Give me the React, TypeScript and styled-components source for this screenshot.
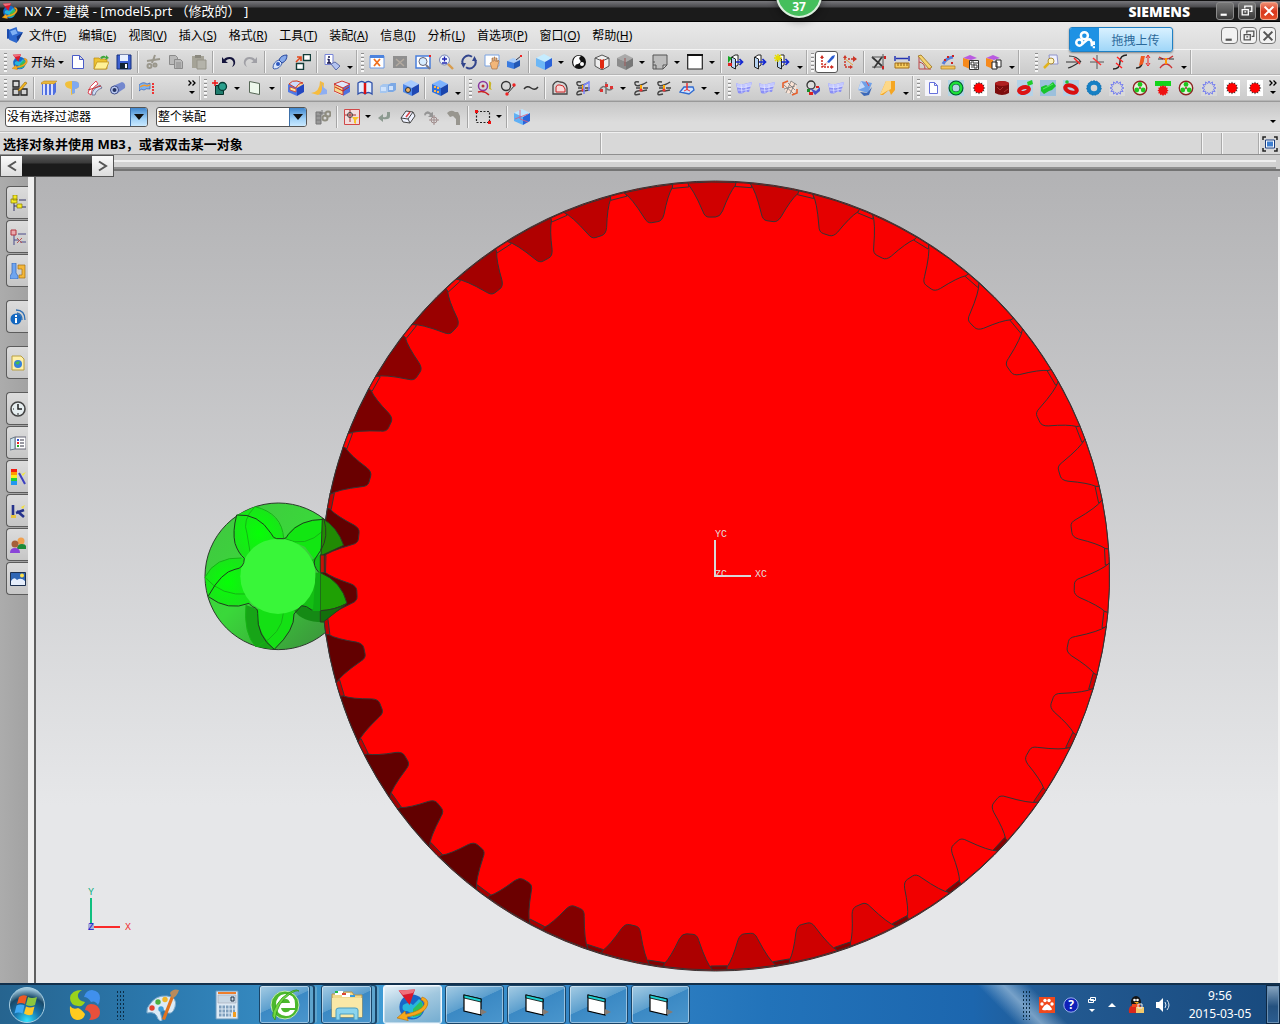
import React from "react";
import styled, { createGlobalStyle, css } from "styled-components";

const UI_FONT = `"Noto Sans", "Noto Sans CJK SC", sans-serif`;

const GlobalStyle = createGlobalStyle`
  * { box-sizing: border-box; }
  body { margin: 0; font-family: ${UI_FONT}; font-size: 12px; color: #000; background: #b4b4b4; }
  button { font: inherit; color: inherit; border: 0; padding: 0; background: none; }
`;

/* ---------- small drawings ---------- */

const cubeShape = (top: string, left: string, right: string) => (
  <>
    <path d="M0 4 8 0l8 4-7 4z" fill={top} />
    <path d="M0 4l9 4v8l-9-4z" fill={left} />
    <path d="M16 4 9 8v8l7-4z" fill={right} />
  </>
);
const surfaceShape = (
  <>
    <path d="M0 3q4 2 8 1t8-2l-3 10q-4-1-6 1-2 1-5 0z" fill="#8b90f6" />
    <path d="M0 3q4 2 8 1t8-2l-1 4q-8 3-14 1z" fill="#c3c8ff" />
    <path d="M1 7q6 2 14-1M2 10q5 1 12-1M5 4l1 9M10 4v8" stroke="#e6e8ff" fill="none" strokeWidth=".7" />
  </>
);
const curveShape = (
  <>
    <path d="M6 2Q1 1 2 4t6 1 6-3M7 14q-6 2-5-1t7-2l5-1M3 8h5M10 8h5" stroke="#444" fill="none" strokeWidth="1.4" />
    <path d="M8 5v6" stroke="#fa0" strokeWidth="2" />
    <circle cx="8" cy="10" r="1.6" fill="#e33" />
  </>
);
const gearPoints = (n: number, r1: number, r2: number) =>
  Array.from({ length: n * 2 }, (_, i) => {
    const a = (i * Math.PI) / n;
    const r = i % 2 ? r1 : r2;
    return `${(8 + r * Math.cos(a)).toFixed(2)},${(8 + r * Math.sin(a)).toFixed(2)}`;
  }).join(" ");
const redGear = (
  <>
    <path d="M0 0h16v16H0z" fill="#fff" />
    <polygon points={gearPoints(12, 4.4, 6.4)} fill="#333" />
    <circle cx="8" cy="8" r="4.8" fill="#f00" />
  </>
);
const blueGearLine = (
  <>
    <path d="M0 0h16v16H0z" fill="#d9d9d9" />
    <polygon points={gearPoints(12, 4.6, 7)} fill="none" stroke="#7780f0" />
  </>
);
const planetary = (
  <>
    <circle cx="8" cy="8" r="6.7" fill="#e6f4de" stroke="#8d2424" strokeWidth="1.4" />
    <circle cx="8" cy="4.4" r="2.4" fill="#1ec81e" />
    <circle cx="4.800" cy="10" r="2.4" fill="#1ec81e" />
    <circle cx="11.200" cy="10" r="2.4" fill="#1ec81e" />
    <circle cx="8" cy="8" r="1.2" fill="#a55" />
  </>
);
const exitDoor = (
  <>
    <path d="M4 3l3-2h3v10l-3 2z" fill="#fff" stroke="#222" />
    <path d="M3.500 3l4 2v10l-4-2z" fill="#b8d4f4" stroke="#222" />
    <path d="M8 8h6M11.500 5l3 3-3 3" stroke="#1428d0" strokeWidth="1.700" fill="none" />
  </>
);
const globe = (
  <>
    <circle cx="7.500" cy="9" r="6.300" fill="#1767c8" />
    <path d="M3 8q3-2 5 0l3-3q3 2 2 6-3 5-7 3 2-2-1-3-3 0-2-3z" fill="#27b5dc" />
    <path d="M8 10l4-4q2 3 0 7l-4 1z" fill="#2fc05c" />
    <path d="M12.500 4q3.500 1 2.800 4Q14 12.500 5 14l.600 1.800L0 14.500 4 11l.400 1.600Q12 11 13.500 8q.800-2-1.500-2.500z" fill="#f5a81c" stroke="#b96f0a" strokeWidth=".3" />
    <path d="M.800.800 9 .300 6.300 8z" fill="#d8182c" />
    <path d="M.800.800 9 .300 8 2 3 3z" fill="#f0707c" />
  </>
);

const ICONS: Record<string, React.ReactNode> = {
  nx: globe,
  blueprint: (
    <>
      <path d="M1 3 9 0l1 4 5 1-6 10-7-3z" fill="#2d68ce" />
      <path d="M3 4l5-2 2 4-5 2z" fill="#7fb0f4" />
      <path d="M9 9l6-4-5 9z" fill="#143a8c" />
      <path d="M0 2h2v9H0z" fill="#1b4bad" />
    </>
  ),
  newDoc: <path d="M2.500 1.500h7l4 4v9h-11zM9.500 1.500v4h4" fill="#fff" stroke="#4a5cc8" strokeLinejoin="round" />,
  open: (
    <>
      <path d="M1 4h5l1 1h7v10H1z" fill="#eec22f" stroke="#b98a12" strokeWidth=".7" />
      <path d="M4 8h12l-3 7H1z" fill="#fff095" stroke="#b98a12" strokeWidth=".7" />
      <path d="M7 4q3-4 6-1V1l3 3-4 2 1-2q-3-1-4 1z" fill="#3ea63c" />
    </>
  ),
  save: (
    <>
      <path d="M1 1h14v14H1z" fill="#3b5fd0" stroke="#17307c" />
      <path d="M4 1h8v6H4z" fill="#e8f0ff" />
      <path d="M4 9h8v6H4z" fill="#123" />
      <path d="M9 10h2v4H9z" fill="#fff" />
    </>
  ),
  cut: (
    <g stroke="#9a978c" fill="none" strokeWidth="2">
      <path d="M10 1 7 9M2 7l13-2" />
      <circle cx="4.500" cy="12" r="2" />
      <circle cx="10" cy="11" r="1.500" />
    </g>
  ),
  copy: (
    <g fill="#b9b9b9" stroke="#8b8b8b">
      <path d="M1.500 1.500h6l2 2v7h-8z" />
      <path d="M6.500 5.500h6l2 2v7h-8z" />
      <path d="M8 9h5M8 11h5M8 13h5" />
    </g>
  ),
  paste: (
    <>
      <path d="M1 2h12v12H1z" fill="#a5a397" />
      <path d="M4 1h6v3H4z" fill="#8a887e" />
      <path d="M6 6h9v9H6z" fill="#b4b3aa" stroke="#959388" />
    </>
  ),
  undo: <path d="M2 3v6h6L5.500 7Q9 3.500 12 6t0 7q4-2 3-6T9.500 3 4 5.500z" fill="#14143c" />,
  redo: <path d="M14 3v6H8l2.500-2Q7 3.500 4 6t0 7Q0 11 1 7t5.500-4T12 5.500z" fill="#a0a0a6" />,
  rocket: (
    <>
      <path d="M1 14q0-6 6-8l3 3q-2 6-8 6z" fill="#d8e5fb" stroke="#3d5fae" />
      <path d="M7 6q2-5 8-5 0 6-5 8z" fill="#86a9ea" stroke="#28489c" />
      <circle cx="6" cy="10" r="2" fill="#2c58c0" />
    </>
  ),
  swap: (
    <>
      <path d="M8.500.500h7v6h-7zM1.500 9.500h7v6h-7z" fill="#fff" stroke="#123c38" strokeWidth="1.400" />
      <path d="M1 8l4-4M2 3h4v4" stroke="#e2481c" strokeWidth="1.600" fill="none" />
    </>
  ),
  info: (
    <>
      <path d="M1 .500h8v10H1z" fill="#fff" stroke="#7784d8" />
      <path d="M5 2v2M5 5v4M3.500 5.500H5M3 9h4" stroke="#15154e" strokeWidth="1.500" />
      <path d="M7 10l4-2 5 4-4 4z" fill="#b3c3f0" stroke="#5b6ba8" />
    </>
  ),
  fit: (
    <>
      <path d="M1 2h14v12H1z" fill="#fff" stroke="#6b98e4" />
      <path d="M1 1h14v3H1z" fill="#4c83de" />
      <path d="M5 5l6 7M11 5l-6 7" stroke="#f0701e" strokeWidth="1.800" />
    </>
  ),
  fitGrey: (
    <>
      <path d="M1 2h14v12H1z" fill="#8f8f8f" />
      <path d="M4 5l8 7M12 5l-8 7" stroke="#b3aaa0" strokeWidth="1.500" />
    </>
  ),
  zoomBox: (
    <>
      <path d="M1 2h14v12H1z" fill="#fff" stroke="#497fdc" strokeWidth="1.500" />
      <circle cx="8" cy="7.500" r="4" fill="#d7ecff" stroke="#667" />
      <path d="M11 11l4 4" stroke="#778" strokeWidth="2" />
      <path d="M14 1h2v2h-2z" fill="#e22" />
    </>
  ),
  zoom: (
    <>
      <circle cx="6.500" cy="6" r="5" fill="#eef5ff" stroke="#7686b4" />
      <path d="M10 10l5 5" stroke="#d89c4c" strokeWidth="2.400" />
      <path d="M4 5h5M6.500 2.500v5M4 9h5" stroke="#2026b0" strokeWidth="1.300" />
    </>
  ),
  rotate: (
    <>
      <path d="M2.500 11A6 6 0 0 1 11 2.800M13.500 5A6 6 0 0 1 5 13.200" fill="none" stroke="#32458c" strokeWidth="2" />
      <path d="M0 9l5 0-2.500 5zM16 7h-5l2.500-5z" fill="#32458c" />
    </>
  ),
  pan: (
    <>
      <path d="M1 1h14v11H1z" fill="#fff" stroke="#7aa3e2" />
      <path d="M6 9l2-1V4h1v3h1V3h1v4h1V4h1v4l1-2 1 1-2 8H8z" fill="#f2b679" stroke="#9b673a" strokeWidth=".600" />
    </>
  ),
  perspective: (
    <>
      <path d="M0 7l6-3 7 2-6 3z" fill="#a9cdfa" />
      <path d="M0 7l7 2v6l-7-2z" fill="#3a7be0" />
      <path d="M13 6 7 9v6l6-3z" fill="#2257b4" />
      <path d="M9 6l5-4" stroke="#334" />
      <path d="M13 1h2v2h-2z" fill="#e22" />
    </>
  ),
  cube: cubeShape("#c5ecff", "#6db7f6", "#2a62d8"),
  yinyang: (
    <>
      <circle cx="8" cy="8" r="7" fill="#111" />
      <path d="M10 2q-3 2-1 4t-2 4q-3 0-3 3Q1 9 3 5t7-3z" fill="#fff" />
      <circle cx="11" cy="10" r="2" fill="#fff" />
    </>
  ),
  cubeRed: (
    <>
      <path d="M1 4 8 1l7 3v8l-7 4-7-4z" fill="#eee" stroke="#555" />
      <path d="M1 4l7 3 7-3M8 7v9" stroke="#555" fill="none" />
      <path d="M6 5l2 1 2-1v9l-2 1-2-1z" fill="#e02a12" />
    </>
  ),
  cubeGrey: (
    <>
      {cubeShape("#aaa", "#8c8c8c", "#777")}
      <path d="M8 4v8" stroke="#955" strokeWidth="1" />
    </>
  ),
  sheet: <path d="M1 1h14v10l-4 4H1zM1 11h3v4M15 11h-4v4M1 8h2" fill="#bdbdbd" stroke="#555" />,
  whiteBox: (
    <>
      <path d="M.700 1h14.600v14H.700z" fill="#fff" stroke="#222" strokeWidth="1.200" />
      <path d="M0 0h16v2H0z" fill="#111" />
    </>
  ),
  door1: (
    <>
      {exitDoor}
      <path d="M0 2l4 2-4 5z" fill="#15a524" />
      <path d="M0 9h4v3H0z" fill="#d22" />
    </>
  ),
  door2: exitDoor,
  door3: (
    <>
      {exitDoor}
      <path d="M4 0v8M0 4h8M1 1l6 6M7 1 1 7" stroke="#e6dc00" strokeWidth="1.400" />
    </>
  ),
  axesPen: (
    <>
      <path d="M3 3v10h9M3 13l5-4" stroke="#cc2b20" fill="none" strokeWidth="1.500" strokeDasharray="2 1" />
      <path d="M1 4l2-3 2 3zM12 11l3 2-3 2z" fill="#cc2b20" />
      <path d="M8 8l5-6 3-1-1 3-5 5z" fill="#2a5cd0" />
    </>
  ),
  axes: (
    <>
      <path d="M3 4v9M3 13h5M6 5h9" stroke="#cc3527" strokeWidth="1.500" strokeDasharray="2 1" />
      <path d="M1 4l2-3 2 3zM11 2l4 3-4 3zM8 11l3 2-3 2z" fill="#cc3527" />
      <path d="M3 5l8 6" stroke="#e9a13b" />
    </>
  ),
  xDim: (
    <>
      <path d="M1 3l10 9M11 3 3 14" stroke="#333" strokeWidth="1.700" />
      <path d="M1 3h14M12 0v16M1 13h11" stroke="#555" />
      <path d="M13 2h2v3h-2zM11 12h2v3h-2z" fill="#c22" />
    </>
  ),
  ruler: (
    <>
      <path d="M1 2v5M15 2v5M2 4.500h12" stroke="#2434b4" strokeWidth="1.500" />
      <path d="M1 9h14v5H1z" fill="#f8cf62" stroke="#a46e16" />
      <path d="M4 9v3M7 9v3M10 9v3M13 9v3" stroke="#8a5a10" />
    </>
  ),
  angle: (
    <>
      <path d="M2 3v12h12M2 8q6 1 6 7" stroke="#b44" fill="none" />
      <path d="M1 2l3-1 11 12-3 2z" fill="#f5d470" stroke="#99701c" strokeWidth=".800" />
    </>
  ),
  measure: (
    <>
      <path d="M1 12h14v3H1z" fill="#f4c35c" stroke="#a77b22" strokeWidth=".700" />
      <path d="M3 10q3-6 10-7" stroke="#5c7fd8" strokeWidth="3" fill="none" />
      <path d="M4 5h2v2H4zM7 2h2v2H7zM12 1h2v2h-2zM11 8h2v2h-2z" fill="#c22" />
    </>
  ),
  boxCopy: (
    <>
      <path d="M0 4l7-3 7 3-6 2z" fill="#b95be0" />
      <path d="M0 4l7 2v9l-7-3z" fill="#f68a1d" />
      <path d="M6.500 6.500h9v9h-9z" fill="#fff" stroke="#333" />
      <path d="M8 8h3v3H8zM11 11h3v3h-3zM8 13h2M12 9h3" stroke="#333" fill="none" />
    </>
  ),
  boxFlip: (
    <>
      <path d="M0 4l7-3 7 3-6 2z" fill="#b95be0" />
      <path d="M0 4l7 2v9l-7-3z" fill="#f68a1d" />
      <path d="M6 8h5v7H6zM10 6h5v7h-5z" fill="#fff" stroke="#222" />
    </>
  ),
  keyDoc: (
    <>
      <path d="M6 1h8l1 9H7z" fill="#eef0ff" stroke="#8f93c8" />
      <circle cx="8" cy="7" r="3" fill="#fff4c0" stroke="#a98b3b" />
      <path d="M6 9l-5 5" stroke="#e2b31c" strokeWidth="2.500" />
    </>
  ),
  trim1: (
    <>
      <path d="M3 2q8 0 12 6M0 8h15M2 14q4-1 10-5" stroke="#333" fill="none" strokeWidth="1.200" />
      <path d="M8 4l6 6" stroke="#f22" strokeWidth="1.500" />
    </>
  ),
  trim2: (
    <>
      <path d="M8 1v14M1 8h14" stroke="#555" />
      <path d="M4 4l8 7" stroke="#f33" strokeWidth="1.500" />
    </>
  ),
  trim3: (
    <>
      <path d="M1 15q7 0 7-7t7-7" stroke="#222" fill="none" strokeWidth="1.400" />
      <path d="M5 3l6 5M4 9l6 5" stroke="#f22" strokeWidth="1.400" />
    </>
  ),
  trim4: (
    <>
      <path d="M1 14q7 1 7-12" stroke="#222" fill="none" strokeWidth="1.500" />
      <path d="M6 2h4l-2 8-4 2z" fill="#f05a20" />
      <path d="M13 2v8M11 4l2-3 2 3M11 9l2 3 2-3" stroke="#e22" fill="none" />
    </>
  ),
  trim5: (
    <>
      <path d="M1 3q7 5 14-1M2 14q6-8 12 0" stroke="#c33" fill="none" strokeWidth="1.300" />
      <path d="M0 5h5M11 5h5" stroke="#333" />
      <path d="M8 4v6" stroke="#f90" strokeWidth="2" />
    </>
  ),
  sketch: (
    <>
      <path d="M1 1h6v6H1zM1 9h6v6H1zM9 9h6v6H9z" fill="none" stroke="#222" strokeWidth="1.300" />
      <path d="M7 9l6-7 2 1-6 7-3 1z" fill="#f6b91f" stroke="#8c6210" strokeWidth=".600" />
    </>
  ),
  extrude: (
    <>
      <path d="M1 3h14v9l-2 3H1z" fill="#4f6fe0" />
      <path d="M0 3l3-2h13l-3 3H0z" fill="#e9b73c" stroke="#b37f1a" strokeWidth=".5" />
      <path d="M3 4v11M7 4v11M11 4v11" stroke="#e8ecff" strokeWidth="1.800" />
    </>
  ),
  revolve: (
    <>
      <path d="M1 4q0-3 7-3t7 3v3q-2 2-4 2v4l-4 2V9Q1 8 1 4z" fill="#f1c03c" />
      <path d="M8 1q7 0 7 3v3q-2 2-4 2v4l-3 1z" fill="#7fa9f0" />
    </>
  ),
  blade: (
    <>
      <path d="M1 13Q2 6 9 1l2 3Q4 8 4 15z" fill="#fff" stroke="#d45" />
      <path d="M5 15q0-6 8-10l2 3q-6 2-7 7z" fill="#ccdcf6" stroke="#557" strokeWidth=".700" />
      <path d="M1 10l13-4" stroke="#c33" />
    </>
  ),
  tube: (
    <>
      <path d="M3 6l9-4q4 1 3 6l-9 6z" fill="#7488ce" />
      <ellipse cx="4.500" cy="10" rx="4" ry="4" fill="#bac9f1" stroke="#3e4d88" />
      <ellipse cx="4.500" cy="10" rx="2" ry="2" fill="#243261" />
    </>
  ),
  offset: (
    <>
      <path d="M0 5q4-4 8-1l3-1v6Q7 8 5 10q-3-2-5 1z" fill="#7db3f2" stroke="#3b62b0" strokeWidth=".700" />
      <path d="M1 7q4-3 7-1l3-1" stroke="#f39a2c" strokeWidth="1.500" fill="none" />
      <path d="M14 3v12" stroke="#e33" strokeDasharray="2 1" strokeWidth="2" />
    </>
  ),
  addCircle: (
    <>
      <path d="M3.500 5.500h8v9h-8z" fill="#1f7c6d" stroke="#052f28" />
      <circle cx="10.500" cy="6.500" r="4" fill="#2aa08d" stroke="#053b33" strokeWidth="1.300" />
      <path d="M0 3h6M3 0v6" stroke="#e11" strokeWidth="1.400" />
    </>
  ),
  planeSheet: <path d="M2.500 1.500l10 2v11l-10-2z" fill="#edf8ec" stroke="#565" />,
  boxOrange: (
    <>
      {cubeShape("#ffd089", "#4f78e6", "#2447c0")}
      <path d="M1 4q3-4 8-3l6 2q-5 0-7 5z" fill="#c9dcfb" stroke="#cf3b28" />
      <path d="M2 7l6 2v3l-6-2z" fill="#ffe79a" stroke="#d4452e" strokeWidth=".8" />
    </>
  ),
  wing: (
    <>
      <path d="M0 13q9-1 9-12l4 2q0 10-6 12z" fill="#f7bc3d" />
      <path d="M10 1l2 6 4 3v4l-8 1q5-5 2-14z" fill="#8eaef2" />
    </>
  ),
  boxRedBand: (
    <>
      {cubeShape("#fff0d0", "#fff", "#4d70e0")}
      <path d="M0 4l9 4v7l-9-4z" fill="#f6d98c" stroke="#c33" />
      <path d="M0 4 8 1l8 3-7 4z" fill="#dfe7fb" stroke="#c33" />
      <path d="M1 7l8 4 6-4" stroke="#cc2614" fill="none" />
    </>
  ),
  book: (
    <>
      <path d="M1 3q4-3 7 0 3-3 7 0v11q-4-3-7 0-3-3-7 0z" fill="#e2edff" stroke="#2f50a8" strokeWidth="1.300" />
      <path d="M8 3v11" stroke="#d11" strokeWidth="2.500" />
    </>
  ),
  slabs: (
    <>
      <path d="M0 6l3-2h6v7l-3 2H0z" fill="#a5c6ef" />
      <path d="M8 5l3-2h5v7l-3 2H8z" fill="#7da9e5" />
      <path d="M1 7h5v4H1zM9 6h4v4H9z" fill="#cfe2fb" />
    </>
  ),
  boxHole: (
    <>
      {cubeShape("#a7cbff", "#4f88ea", "#1f48b4")}
      <circle cx="5" cy="10" r="2.500" fill="#f0b060" stroke="#234" />
    </>
  ),
  boxDots: (
    <>
      {cubeShape("#7db3ff", "#2f70dd", "#1a45ad")}
      <path d="M2 6h2v2H2zM5 7h2v2H5zM2 10h2v2H2zM5 11h2v2H5z" fill="#ffb648" />
    </>
  ),
  circ1: (
    <>
      <circle cx="6" cy="6" r="4.500" fill="none" stroke="#8a35a0" strokeWidth="1.500" />
      <circle cx="6" cy="6" r="1.500" fill="#b33" />
      <path d="M1 12q6-2 11 3" stroke="#c22" fill="none" strokeWidth="1.500" />
      <path d="M12 1q3 1 2 4t1 5l-3-1z" fill="#c9b529" />
    </>
  ),
  circ2: (
    <>
      <circle cx="6" cy="6" r="4.500" fill="none" stroke="#333" strokeWidth="1.300" />
      <path d="M15 5l-8 9" stroke="#333" />
      <circle cx="14" cy="5" r="1.700" fill="#e22" />
      <circle cx="7" cy="14" r="1.700" fill="#e22" />
    </>
  ),
  wave: <path d="M1 9q3-4 7-1t7-1" fill="none" stroke="#333" strokeWidth="1.400" />,
  contour: (
    <>
      <path d="M1 14V5q3-5 7-3 6 0 7 6v6z" fill="none" stroke="#444" strokeWidth="1.300" />
      <path d="M4 12V7q1-3 4-2 4 0 5 4v3z" fill="#f8d9d9" stroke="#c22" />
    </>
  ),
  curveA: (
    <>
      {curveShape}
      <path d="M9 14V5l5-3v9" stroke="#7a86ff" fill="none" strokeWidth="1.500" />
    </>
  ),
  curveB: (
    <>
      <path d="M1 11q4-7 7-3t7 0M8 2v12" stroke="#777" fill="none" strokeWidth="1.500" />
      <path d="M7 4h3v3H7zM2 9h3v3H2zM12 6h3v3h-3z" fill="#d33" />
    </>
  ),
  curveC: curveShape,
  project: (
    <>
      <path d="M1 12l4-5h9l1 3-5 4z" fill="#cfe3ff" stroke="#2f6ad0" strokeWidth="1.300" />
      <path d="M3 2h10" stroke="#444" strokeWidth="1.500" />
      <path d="M8 3v7" stroke="#e33" strokeWidth="1.500" />
      <path d="M5 11q3-3 6 0" stroke="#e33" fill="none" />
    </>
  ),
  surf: surfaceShape,
  surfMesh: (
    <>
      <path d="M2 5l7-4 6 4-3 9-8-1z" fill="#fbe3d5" />
      <path d="M2 5l10 9M6 3l7 7M9 1l6 4M4 13 9 1M8 14l5-11M2 9l11-3" stroke="#777" strokeWidth=".800" />
      <path d="M1 8V3l5-2M15 9v4l-5 2" stroke="#e8602c" fill="none" strokeWidth="1.600" />
    </>
  ),
  surfTool: (
    <>
      <circle cx="6" cy="5" r="4" fill="#ddd" stroke="#333" strokeWidth="1.300" />
      <path d="M5 8l6 3 4-4v4l-5 4z" fill="#4650c8" />
      <path d="M2 9h3v3H2z" fill="#1a8c2a" />
      <path d="M4 12h4v3H4zM11 6h3v2h-3z" fill="#d22" />
    </>
  ),
  fold: (
    <>
      <path d="M4 1l11 2-4 10-10-3z" fill="#6fa0e8" />
      <path d="M4 1l4 6-7 3z" fill="#c5dafa" />
      <path d="M3 12l7 1 5-6-3 8-5 1z" fill="#3b68b8" />
      <path d="M9 1l3 5" stroke="#e44" />
    </>
  ),
  boot: (
    <>
      <path d="M6 1h9v9l-4 5-2-5-6 5H0z" fill="#f5a623" />
      <path d="M6 1h5v8l-4 2-7 4z" fill="#fdd888" />
    </>
  ),
  page: (
    <>
      <path d="M0 0h16v16H0z" fill="#f4f4fa" />
      <path d="M4.500 2.500h5l3 3v8h-8zM9.500 2.500v3h3" fill="#fff" stroke="#6671dc" />
    </>
  ),
  ringGreen: (
    <>
      <path d="M0 0h16v16H0z" fill="#b4d4e4" />
      <circle cx="8" cy="8" r="5.500" fill="none" stroke="#053" strokeWidth="4" />
      <circle cx="8" cy="8" r="5.200" fill="none" stroke="#1de03a" strokeWidth="2.400" />
    </>
  ),
  redGear,
  cylRed: (
    <>
      <path d="M1 3q7-4 14 0v10q-7 4-14 0z" fill="#7c0c0c" />
      <ellipse cx="8" cy="3.500" rx="7" ry="2.500" fill="#b02020" />
      <path d="M3 7l3 3 3-3M10 12l4-3" stroke="#a33" fill="none" />
    </>
  ),
  gearPair: (
    <>
      <path d="M0 0h16v16H0z" fill="#b5d3e8" />
      <ellipse cx="7" cy="10" rx="5" ry="2.800" fill="none" stroke="#dc1414" strokeWidth="4" transform="rotate(-15 7 10)" />
      <path d="M10 2l5-2 1 4-5 2z" fill="#22cc2a" />
    </>
  ),
  shaft: (
    <>
      <path d="M0 0h16v16H0z" fill="#9cc0dc" />
      <path d="M1 7l5-2 2 1 5-4 3 4-4 4-3 1-5 3-3-3z" fill="#18c42c" />
      <path d="M3 9l10-5" stroke="#5de868" />
    </>
  ),
  ringRed: (
    <>
      <path d="M0 0h16v16H0z" fill="#b5d3e8" />
      <ellipse cx="8" cy="9" rx="6" ry="3.400" fill="none" stroke="#d91010" strokeWidth="4" transform="rotate(20 8 9)" />
      <circle cx="4" cy="2" r="1.800" fill="#1fbf35" />
    </>
  ),
  ringBlue: (
    <>
      <circle cx="8" cy="8" r="5.300" fill="none" stroke="#1680c4" strokeWidth="4" />
      <circle cx="8" cy="8" r="7.200" fill="none" stroke="#0f6cae" strokeDasharray="1.500 1.500" />
    </>
  ),
  gearLine: blueGearLine,
  planetary,
  rack: (
    <>
      <path d="M0 1h16v5H0z" fill="#13d41b" />
      <polygon points={gearPoints(12, 4.2, 5.600)} transform="translate(0 2.500)" fill="#e11" />
    </>
  ),
  chain: (
    <>
      <path d="M1 3h5v12H1zM1 7h5M1 11h5" fill="#999" stroke="#777" />
      <circle cx="10" cy="9" r="2.500" fill="none" stroke="#8f8d80" strokeWidth="2" />
      <circle cx="13" cy="5" r="2.500" fill="none" stroke="#8f8d80" strokeWidth="2" />
      <path d="M7 1v5M4 4h6" stroke="#777" />
    </>
  ),
  target: (
    <>
      <path d="M.500.500h15v15H.500z" fill="#f2dede" stroke="#d04848" />
      <path d="M6 1v12M1 6h11" stroke="#a33" />
      <circle cx="6" cy="6" r="2.500" fill="none" stroke="#444" />
      <path d="M8 8h7l-3 3v4l-2-1v-3z" fill="#f6c52a" />
    </>
  ),
  returnGrey: <path d="M13 3v4q0 4-7 3v3L1 9l5-4v3q4 1 4-2V3z" fill="#8c9a90" />,
  eraser: (
    <>
      <path d="M1 9l5-7 7 1 2 4-5 7-7-1z" fill="#eef2ff" stroke="#444" />
      <path d="M1 9l7 1 2 4M8 10l5-7" stroke="#444" fill="none" />
      <path d="M6 8l4-5" stroke="#d44" strokeWidth="1.500" />
    </>
  ),
  snapGrey: (
    <>
      <path d="M1 5q3-5 7-1l2-1v5H5l2-2Q4 3 2 7z" fill="#959595" />
      <circle cx="11" cy="11" r="3" fill="none" stroke="#a08c8c" />
      <path d="M11 6v10M6 11h10" stroke="#a08c8c" />
    </>
  ),
  hookGrey: <path d="M1 4q4-4 8-1h3l2 4v9h-4v-6L7 7 4 8z" fill="#98968f" />,
  marquee: (
    <>
      <path d="M1.500 2.500h13v11h-13z" fill="none" stroke="#222" strokeDasharray="2 1.500" strokeWidth="1.200" />
      <path d="M0 1h3v3H0zM13 12h3v3h-3z" fill="#e11" />
    </>
  ),
  cubeLines: (
    <>
      {cubeShape("#bfe6ff", "#5fb0f6", "#2a66da")}
      <path d="M6 1v9l8 3M1 10l5-2 8-3" stroke="#e05878" fill="none" strokeWidth=".8" />
    </>
  ),
  fullscreen: (
    <>
      <path d="M1 4V1h3M12 1h3v3M15 12v3h-3M4 15H1v-3" fill="none" stroke="#222" strokeWidth="1.500" />
      <path d="M3.500 4h9v8h-9z" fill="#fff" stroke="#1c3f80" />
      <path d="M5 5.500h6v5H5z" fill="#3f7fd0" />
    </>
  ),
  /* resource bar */
  tree: (
    <>
      <path d="M4 7v9M4 11h5M9 5h7M10 12h6" stroke="#336" fill="none" />
      <path d="M1 4h6v4H1zM3 0h4v5H3zM7 9h5v4H7z" fill="#f4ea26" stroke="#887d00" strokeWidth=".700" />
    </>
  ),
  treeRed: (
    <>
      <path d="M4 6v10M4 11h5M8 5h8M10 13h6" stroke="#4b4b88" fill="none" />
      <path d="M1 1h5v5H1z" fill="#e9a9ad" stroke="#b23440" />
      <path d="M7 9l5 5M12 9l-5 5" stroke="#b55" />
    </>
  ),
  wrench: (
    <>
      <path d="M2 0h4v10l2 3v3H0v-3l2-3z" fill="#6fa5f0" stroke="#3464b4" strokeWidth=".700" />
      <path d="M8 2h7v13H9v-3h3V6H8z" fill="#f4b73a" stroke="#a16e12" strokeWidth=".700" />
    </>
  ),
  broadcast: (
    <>
      <circle cx="6" cy="10" r="5.500" fill="#1267c0" />
      <path d="M6 6v2M6 9v5" stroke="#fff" strokeWidth="2" />
      <path d="M6 1q9 0 9 10M7 4q5 1 5 7" fill="none" stroke="#2f70b4" strokeWidth="1.300" />
    </>
  ),
  webPage: (
    <>
      <path d="M2 1h9l3 3v11H2z" fill="#fff0a8" stroke="#b99f40" />
      <circle cx="8" cy="9" r="4" fill="#3681da" />
      <path d="M5 8q3-3 5-1l-2 3z" fill="#43bd49" />
    </>
  ),
  clock: (
    <>
      <circle cx="8" cy="8" r="7" fill="#e6eef0" stroke="#444" strokeWidth="1.600" />
      <path d="M8 3v5h4" stroke="#222" fill="none" strokeWidth="1.500" />
      <path d="M8 12v2M3 8h1" stroke="#222" />
    </>
  ),
  roles: (
    <>
      <path d="M5 2h11v12H5z" fill="#fff" stroke="#667" />
      <path d="M0 4l5-2v12l-5 1z" fill="#cfe4ee" stroke="#678" />
      <path d="M10 5h4M10 8h4M10 11h4" stroke="#334" />
      <path d="M7 4h2v2H7z" fill="#2a4bd0" />
      <path d="M7 7h2v2H7z" fill="#e22" />
      <path d="M7 10h2v2H7z" fill="#2a2" />
    </>
  ),
  rainbow: (
    <>
      <path d="M1 0h6v3.200H1z" fill="#f21b10" />
      <path d="M1 3h6v3.200H1z" fill="#ff9800" />
      <path d="M1 6h6v3.200H1z" fill="#f7ef1e" />
      <path d="M1 9h6v3.200H1z" fill="#22cf35" />
      <path d="M1 12h6v4H1z" fill="#2197f0" />
      <path d="M9 4l6 11" stroke="#3b3fc0" strokeWidth="2" />
      <path d="M9 1l3 4 4-2-3 4z" fill="#f3e93c" />
    </>
  ),
  wand: (
    <>
      <path d="M3 2v12M7 8l7 6M6 10l8-3" fill="none" stroke="#26338c" strokeWidth="2.600" />
      <path d="M9 2l2 2 4-2-2 4z" fill="#f3e03c" />
      <path d="M1 12h5v3H1z" fill="#e8c540" />
    </>
  ),
  people: (
    <>
      <circle cx="11" cy="4" r="3.500" fill="#f1a14f" />
      <path d="M7 12q0-5 5-5t4 5z" fill="#1d8a38" />
      <circle cx="5" cy="7" r="3.500" fill="#a6603a" />
      <path d="M0 16q0-5 5-5t5 5z" fill="#8a44d8" />
    </>
  ),
  photo: (
    <>
      <path d="M.500 1.500h15v13H.500z" fill="#2f66b4" stroke="#1c3050" />
      <path d="M1 10q3-5 6-1 4-3 8 1v4H1z" fill="#e6eefb" />
      <circle cx="12" cy="4.500" r="2" fill="#ffe14a" />
    </>
  ),
  /* window controls */
  minimize: <path d="M3 11h7v2.500H3z" fill="currentColor" />,
  restore: <path d="M5.500 5V2.500h8v6H11M2.500 6.500h7v6h-7zM5 9h2" fill="none" stroke="currentColor" strokeWidth="1.500" />,
  close: <path d="M3 3l10 10M13 3 3 13" stroke="currentColor" strokeWidth="2.400" />,
  cloud: (
    <g fill="none" stroke="#fff" strokeWidth="2">
      <circle cx="7.500" cy="4.500" r="2.800" />
      <circle cx="3.500" cy="10" r="2.500" />
      <path d="M5.500 11.500l4-3.500q4-2 4 4v1M15.200 9v3M15.200 13v1.500" />
    </g>
  ),
};

const Svg = styled.svg<{ $size: number }>`
  display: block;
  flex: none;
  width: ${(p) => p.$size}px;
  height: ${(p) => p.$size}px;
`;
const Icon = ({ name, size = 16 }: { name: string; size?: number }) => (
  <Svg $size={size} viewBox="0 0 16 16" aria-hidden="true">
    {ICONS[name]}
  </Svg>
);

/* ---------- window frame ---------- */

const Window = styled.div`
  display: flex;
  flex-direction: column;
  min-height: 100vh;
  position: relative;
  overflow: hidden;
`;
const TitleBar = styled.header`
  display: flex;
  align-items: center;
  height: 22px;
  padding: 0 2px 0 2px;
  gap: 4px;
  color: #fff;
  border-top: 1px solid #111;
  border-bottom: 1px solid #000;
  background: linear-gradient(#77777b 0, #4a4a4d 6px, #1b1b1b 7px, #1b1b1b 100%);
`;
const TitleText = styled.h1`
  margin: 0 auto 0 0;
  padding-left: 2px;
  font-size: 13px;
  line-height: 20px;
  font-weight: 400;
  white-space: pre;
`;
const Brand = styled.span`
  font: 800 14px "Open Sans", sans-serif;
  margin-right: 22px;
`;
const FrameButton = styled.button<{ $danger?: boolean }>`
  display: grid;
  place-items: center;
  width: 18px;
  height: 18px;
  border: 1px solid ${(p) => (p.$danger ? "#f3a78f" : "#8b8b8b")};
  border-radius: 3px;
  background: ${(p) => (p.$danger ? "linear-gradient(#ee8b6f, #d8361b 55%, #e5502b)" : "linear-gradient(#777, #3a3a3a)")};
`;
const MenuBar = styled.nav`
  display: flex;
  align-items: center;
  height: 27px;
  padding: 0 4px 0 4px;
  background: linear-gradient(#e9e9e9, #dcdcdc);
`;
const MenuIcon = styled.span`
  padding: 0 5px 0 3px;
`;
const MenuButton = styled.button`
  margin-right: 12px;
  font-size: 12px;
  line-height: 20px;
  white-space: nowrap;
`;
const ChildControls = styled.div`
  display: flex;
  gap: 2px;
  margin-left: auto;
`;
const ChildButton = styled.button`
  display: grid;
  place-items: center;
  width: 17px;
  height: 17px;
  color: #555;
  border: 1px solid #777;
  border-radius: 4px;
  background: #f2f2f2;
`;

/* ---------- tool bars ---------- */

const ToolRow = styled.div`
  display: flex;
  height: 26px;
  border-top: 1px solid #f4f4f4;
  border-bottom: 1px solid #b5b5b5;
  background: linear-gradient(#dedede, #cbcbcb);
`;
const Bar = styled.div<{ $gap?: number }>`
  display: flex;
  align-items: center;
  border-right: 1px solid #aaa;
  box-shadow: 1px 0 0 #f2f2f2;
  margin-right: ${(p) => p.$gap ?? 0}px;
`;
const Grip = styled.i`
  flex: none;
  width: 3px;
  height: 19px;
  margin: 0 1px 0 4px;
  background: repeating-linear-gradient(#8f8f8f 0 1px, #f7f7f7 1px 3px, transparent 3px 4px);
`;
const Tool = styled.button<{ $pressed?: boolean }>`
  display: grid;
  place-items: center;
  flex: none;
  width: 23px;
  height: 22px;
  ${(p) =>
    p.$pressed &&
    css`
      background: #fff;
      border: 1px solid #555;
      border-radius: 3px;
    `}
`;
const StartButton = styled.button`
  display: flex;
  align-items: center;
  gap: 3px;
  width: 58px;
  padding-left: 4px;
  white-space: nowrap;
`;
const Divider = styled.i`
  flex: none;
  width: 2px;
  height: 22px;
  margin: 0 2px;
  background: linear-gradient(90deg, #a6a6a6 50%, #f5f5f5 50%);
`;
const Arrow = styled.i`
  flex: none;
  border: 3px solid transparent;
  border-top-color: #000;
  border-bottom-width: 0;
`;
const DropArrow = styled.button`
  display: grid;
  place-items: center;
  width: 12px;
  height: 22px;
`;
const Overflow = styled.button<{ $wide?: boolean }>`
  display: flex;
  flex-direction: column;
  align-items: center;
  justify-content: flex-end;
  gap: 5px;
  flex: none;
  width: ${(p) => (p.$wide ? 14 : 13)}px;
  height: 22px;
  margin-left: ${(p) => (p.$wide ? "auto" : 0)};
  padding-bottom: ${(p) => (p.$wide ? 5 : 4)}px;
`;
const Filler = styled.i`
  width: 27px;
`;

const Chevrons = () => (
  <svg width="8" height="6" viewBox="0 0 8 6" aria-hidden="true">
    <path d="M.5.5 3 3 .5 5.500M4.500.5 7 3 4.500 5.500" fill="none" stroke="#000" strokeWidth="1.300" />
  </svg>
);

type BarProps = { items: string; end?: "arrow" | "chevron" | "spaced"; gap?: number; start?: boolean };
const ToolBar = ({ items, end = "arrow", gap, start }: BarProps) => (
  <Bar role="toolbar" $gap={gap}>
    <Grip />
    {start && (
      <StartButton>
        <Icon name="nx" />
        开始
        <Arrow />
      </StartButton>
    )}
    {items.split(" ").map((item, i) => {
      if (item === "|") return <Divider key={i} />;
      if (item === "v")
        return (
          <DropArrow key={i} aria-label="更多">
            <Arrow />
          </DropArrow>
        );
      return (
        <Tool key={i} $pressed={item === "axesPen"} aria-label={item}>
          <Icon name={item} />
        </Tool>
      );
    })}
    {end === "spaced" && <Filler />}
    <Overflow $wide={end !== "arrow"} aria-label="工具条选项">
      {end !== "arrow" && <Chevrons />}
      <Arrow />
    </Overflow>
  </Bar>
);

/* ---------- selection bar and prompt ---------- */

const SelectionRow = styled.div`
  display: flex;
  align-items: center;
  height: 31px;
  padding-left: 5px;
  border-top: 1px solid #999;
  border-bottom: 1px solid #bbb;
  background: linear-gradient(#c6c6c6, #dcdcdc 70%);

  ${DropArrow} {
    width: 10px;
  }
`;
const Combo = styled.label<{ $width: number }>`
  display: flex;
  position: relative;
  width: ${(p) => p.$width}px;
  height: 20px;
  margin-right: 4px;
  border: 1px solid #555;
  border-radius: 3px;
  background: #fff;
  overflow: hidden;

  & + & {
    margin-left: 4px;
  }

  select {
    appearance: none;
    flex: 1;
    min-width: 0;
    border: 0;
    padding: 0 0 0 1px;
    background: none;
    font: 12px ${UI_FONT};
    outline: 0;
  }
`;
const ComboArrow = styled.span`
  display: grid;
  place-items: center;
  width: 17px;
  border-left: 1px solid #3c6fa8;
  background: linear-gradient(#3f87cf, #9fd0f6 60%, #c9e9ff);
  pointer-events: none;

  &::after {
    content: "";
    border: 5px solid transparent;
    border-top: 6px solid #111;
    border-bottom-width: 0;
  }
`;
const PromptRow = styled.div`
  display: flex;
  height: 23px;
  border-top: 1px solid #f0f0f0;
  border-bottom: 1px solid #8f8f8f;
  background: #d8d8d8;
`;
const PromptCell = styled.div<{ $width?: number; $grow?: number }>`
  flex: ${(p) => (p.$grow ? `${p.$grow} 1 0` : "none")};
  width: ${(p) => (p.$width ? `${p.$width}px` : "auto")};
  display: flex;
  align-items: center;
  padding-left: 3px;
  border-right: 1px solid #aaa;
  box-shadow: 1px 0 0 #f5f5f5;
  font-size: 13px;
  line-height: 20px;
  font-weight: 700;
  white-space: nowrap;

  &:last-child {
    border: 0;
  }
`;
const ScrollRow = styled.div`
  display: flex;
  height: 22px;
  background: #b3b3b5;
`;
const TabScroller = styled.div`
  display: flex;
  flex: none;
  width: 114px;
  border: 1px solid #555;
  background: linear-gradient(#555 0, #3a3a3a 7px, #1b1b1b 8px);

  button {
    display: grid;
    place-items: center;
    width: 21px;
    color: #555;
    background: linear-gradient(#fafafa, #dcdcdc);
  }
  span {
    flex: 1;
  }
`;
const Groove = styled.div`
  flex: 1;
  height: 16px;
  padding: 5px 4px 0 0;
  background: #cfcfcf;
  border-bottom: 2px solid #737373;

  &::before {
    content: "";
    display: block;
    height: 5px;
    border-top: 2px solid #efefef;
    border-bottom: 2px solid #8f8f8f;
    background: #d2d2d2;
  }
`;

/* ---------- workspace ---------- */

const Workspace = styled.main`
  display: flex;
  flex: 1;
  min-height: 0;
  border-right: 2px solid #f2f2f2;
`;
const ResourceBar = styled.aside`
  display: flex;
  flex-direction: column;
  flex: none;
  width: 28px;
  padding: 9px 0 0 6px;
  gap: 13px;
  background: linear-gradient(90deg, #acacac, #a2a2a2);
`;
const TabGroup = styled.div`
  display: flex;
  flex-direction: column;
  gap: 1px;
`;
const ResourceTab = styled.button`
  display: grid;
  place-items: center;
  height: 33px;
  border: 1px solid #5c5c5c;
  border-right-width: 0;
  border-radius: 4px 0 0 4px;
  background: linear-gradient(#dcdcdc, #c6c6c6);
`;
const Rail = styled.i`
  flex: none;
  width: 8px;
  background: linear-gradient(90deg, #efefef 0 6px, #5f5f5f 6px 8px);
`;
const Viewport = styled.section`
  flex: 1;
  min-width: 0;
  background: linear-gradient(#b3b3b5, #e6e7e9 78%);
`;
const Scene = styled.svg`
  display: block;
  width: 100%;
  height: 100%;
  font: 10px "Liberation Mono", monospace;
`;

const TEETH = 39;
const CX = 715.5;
const CY = 576;
const polar = (deg: number, r: number) => {
  const a = ((deg - 90) * Math.PI) / 180;
  return `${(CX + r * Math.cos(a)).toFixed(1)} ${(CY + r * Math.sin(a)).toFixed(1)}`;
};
const GAP_SHADES: [number, number][] = [
  [0, 208], [10, 205], [19, 232], [28, 250], [38, 255], [138, 255], [148, 240], [157, 222],
  [166, 205], [175, 192], [184, 172], [194, 155], [203, 130], [212, 106], [222, 98], [282, 98],
  [292, 118], [310, 150], [328, 170], [345, 195], [360, 208],
];
const gapColor = (deg: number) => {
  const d = (deg + 360) % 360;
  const k = GAP_SHADES.findIndex(([a]) => a >= d);
  if (k <= 0) return `rgb(${GAP_SHADES[0][1]},0,0)`;
  const [a0, v0] = GAP_SHADES[k - 1];
  const [a1, v1] = GAP_SHADES[k];
  return `rgb(${Math.round(v0 + ((v1 - v0) * (d - a0)) / (a1 - a0))},0,0)`;
};
const landColor = (deg: number) => {
  const d = (deg + 360) % 360;
  if (d < 100 || d > 285) return "#ff0000";
  if (d < 125) return "#d40000";
  if (d < 200) return "#860000";
  return d < 235 ? "#a50000" : "#c00000";
};

const Gear = () => (
  <g stroke="#343434" strokeWidth="1" strokeLinejoin="round">
    <ellipse cx={CX} cy={CY} rx="394" ry="395" fill="#f00" />
    {Array.from({ length: TEETH }, (_, i) => {
      const c = -0.5 + (i * 360) / TEETH;
      const next = c + 360 / TEETH;
      return (
        <g key={i}>
          <path
            fill={landColor(c + 4.6)}
            d={`M${polar(c + 3.4, 394)} A394 394 0 0 1 ${polar(next - 3.5, 394)} L${polar(next - 3.4, 390)} L${polar(c + 3.4, 390)}Z`}
          />
          <path
            fill={gapColor(c)}
            d={`M${polar(c - 3.7, 394)} Q${polar(c - 2.8, 388)} ${polar(c - 1.5, 365)} Q${polar(c - 1.2, 359)} ${polar(c - 0.5, 359)} L${polar(c + 0.5, 359)} Q${polar(c + 1.2, 359)} ${polar(c + 1.6, 365)} Q${polar(c + 2.6, 384)} ${polar(c + 3.4, 391)} L${polar(c + 3.5, 394)} A394 394 0 0 0 ${polar(c - 3.7, 394)}Z`}
          />
        </g>
      );
    })}
  </g>
);

const Pinion = () => (
  <g transform="translate(195 490) scale(.3333)" strokeWidth="3" fill="none">
    <circle cx="250" cy="259" r="220" fill="url(#pinionBody)" stroke="#2b3a2b" />
    <path d="M125 75 180 50Q258 72 266 146L165 190 148 208Q98 150 125 75z" fill="url(#lobe)" />
    <path d="M30 262Q60 200 148 204L165 340Q100 365 40 320z" fill="url(#lobe)" />
    <path d="M153 345Q145 430 182 470L238 478 188 358z" fill="#17a417" />
    <path d="M188 358Q180 420 238 478 300 420 298 362L250 340z" fill="#14e014" />
    <path d="M270 146Q300 88 387 88 400 160 360 210L330 170z" fill="#12e612" />
    <path d="M298 362Q320 395 385 397L385 362Q340 355 320 346z" fill="#158a15" />
    <path d="M300 365 320 346 350 358 380 362V190L350 210 372 248z" fill="#13bf13" />
    <path d="M180 50Q140 90 156 130L165 185M180 50Q262 70 266 146M270 146Q330 175 385 122M30 262Q60 200 140 204M30 262Q80 320 160 312M153 345Q145 430 182 470M265 370Q262 430 190 468" stroke="#14b414" />
    <circle cx="249" cy="259" r="113" fill="#39f639" />
    <path d="M125 75Q112 125 120 160 130 190 148 205 148 235 120 238 80 245 40 318M40 320Q100 365 162 340L172 350Q190 355 188 370 185 440 238 478 300 420 297 372L320 347Q335 347 350 360M125 75Q190 70 228 130 235 146 245 146H266Q275 146 280 133 315 88 387 88M387 88Q400 160 360 207 352 225 372 248" stroke="#1f3a1f" />
  </g>
);

const PinionInGaps = () => (
  <g transform="translate(195 490) scale(.3333)" strokeWidth="3" stroke="#2b3a20">
    <path d="M382 85Q428 112 446 166L378 197z" fill="#218a04" />
    <path d="M387 88Q402 140 378 180" fill="none" />
    <path d="M376 248Q440 275 456 340 415 362 376 362z" fill="#1fa004" />
    <path d="M376 362Q420 360 455 341L385 396H376z" fill="#146e0c" />
    <path d="M376 195h12v53h-12z" fill="#c41208" />
    <path d="M362 248h14v115h-22z" fill="#0fae12" stroke="none" />
  </g>
);

const Model = () => (
  <Scene viewBox="36 177 1242 806" preserveAspectRatio="xMidYMid meet" role="img" aria-label="齿轮模型">
    <defs>
      <linearGradient id="pinionBody" x1="0" y1="0" x2="1" y2="1">
        <stop offset="0" stopColor="#42c442" />
        <stop offset=".45" stopColor="#3ad83a" />
        <stop offset="1" stopColor="#3c843c" />
      </linearGradient>
      <radialGradient id="lobe">
        <stop offset="0" stopColor="#06ff06" />
        <stop offset="1" stopColor="#1ae41a" />
      </radialGradient>
    </defs>
    <Pinion />
    <Gear />
    <PinionInGaps />
    <g stroke="#d8d8d8" strokeWidth="2">
      <path d="M715 540v36h36" fill="none" />
    </g>
    <g fill="#e4dcdc">
      <text x="715" y="537">YC</text>
      <text x="715" y="577">ZC</text>
      <text x="755" y="577">XC</text>
    </g>
    <path d="M91 898v27" stroke="#10c080" strokeWidth="2" />
    <path d="M93 927h27" stroke="#fa2a2a" strokeWidth="2" />
    <path d="M88 924h6v6h-6z" fill="#aab0d8" />
    <text x="88" y="895" fill="#10b080">Y</text>
    <text x="125" y="930" fill="#f03030">X</text>
    <text x="88" y="930" fill="#2020d0">Z</text>
  </Scene>
);

/* ---------- task bar ---------- */

const TaskBar = styled.footer`
  display: flex;
  align-items: center;
  height: 41px;
  color: #fff;
  border-top: 2px solid #12304c;
  background:
    linear-gradient(45deg, transparent 77%, rgba(190, 215, 235, 0.55) 79%, transparent 81%),
    linear-gradient(90deg, #26648f 0, #2b78ad 12%, #3f9bd4 30%, #3485c6 46%, #2273ba 60%, #1c66ae 76%, #235a92 82%, #184a7e 100%);
`;
const Launcher = styled.button<{ $width: number }>`
  display: grid;
  place-items: center;
  flex: none;
  width: ${(p) => p.$width}px;
  height: 39px;
`;
const LauncherEnd = styled.i`
  flex: none;
  width: 6px;
`;
const DotGrip = styled.i`
  flex: none;
  width: 9px;
  height: 30px;
  background: radial-gradient(circle, #0b2c46 1px, transparent 1px) 0 0 / 3px 4px;
`;
const TaskButton = styled.button<{ $tone?: "active" | "stack" }>`
  display: grid;
  place-items: center;
  flex: none;
  width: ${(p) => (p.$tone === "stack" ? 51 : 59)}px;
  height: 39px;
  margin-right: ${(p) => (p.$tone === "stack" ? 11 : 3)}px;
  border: 1px solid ${(p) => (p.$tone === "active" ? "#f0f8ff" : "#1a4568")};
  border-radius: 3px;
  box-shadow: inset 0 0 0 1px rgba(255, 255, 255, 0.45)${(p) => (p.$tone === "stack" ? ", 4px 0 0 -1px #5da4cd, 5px 0 0 0 #1a4568, 8px 0 0 -1px #5da4cd" : "")};
  background: ${(p) =>
    p.$tone === "active"
      ? "linear-gradient(160deg, #e6f1f8, #a2c8df 45%, #73acd0)"
      : "linear-gradient(155deg, #a5cce4, #5c9fce 45%, #3b89c4 46%, #4a96cd)"};
`;
const Tray = styled.div`
  display: flex;
  align-items: center;
  margin-left: auto;
`;
const TrayButton = styled.button<{ $width: number }>`
  display: grid;
  place-items: center;
  width: ${(p) => p.$width}px;
  height: 30px;
`;
const Clock = styled.time`
  width: 80px;
  margin: 0 6px 0 11px;
  text-align: center;
  font-size: 12px;
  line-height: 18px;
`;
const ShowDesktop = styled.button`
  width: 14px;
  height: 39px;
  border: 1px solid #0c2743;
  box-shadow: inset 0 0 0 1px #6a8fb2;
  background: linear-gradient(#8aa7c2, #24517f 55%, #2c5d90);
`;

const FormIcon = () => (
  <svg width="24" height="22" viewBox="0 0 24 22" aria-hidden="true">
    <path d="M1 1l17 4v16L1 17z" fill="#fff" stroke="#000" strokeWidth="1.200" />
    <path d="M1 1l17 4v3L1 4z" fill="#1fd0d0" stroke="#000" strokeWidth=".800" />
    <path d="M18 15l6 3-6 3z" fill="#857a72" />
  </svg>
);
const StartOrb = () => (
  <svg width="38" height="38" viewBox="0 0 38 38" aria-hidden="true">
    <defs>
      <radialGradient id="orb" cx=".5" cy=".95" r=".9">
        <stop offset="0" stopColor="#2fe4ff" />
        <stop offset=".4" stopColor="#1a76ae" />
        <stop offset=".75" stopColor="#184868" />
        <stop offset="1" stopColor="#9bc3d8" />
      </radialGradient>
    </defs>
    <circle cx="19" cy="19" r="17.500" fill="url(#orb)" stroke="#a9cfe2" />
    <path d="M11 11q4-3 8-1l-2 8q-4-2-8 0z" fill="#ee5a24" />
    <path d="M20 11q4 2 9 0l-2 8q-4 2-9 0z" fill="#8cc63f" />
    <path d="M8.500 19.500q4-2 8 0l-2 8q-4-2-8 0z" fill="#3fa9f5" />
    <path d="M18 20.500q4 2 8.500 0l-2 8q-4 2-8.500-1z" fill="#ffc828" />
  </svg>
);
const Petals = () => (
  <svg width="32" height="32" viewBox="0 0 32 32" aria-hidden="true">
    <path d="M13 1Q8 4 9 8q1 4 7 5-2 5-7 4Q1 16 1 9 2 1 13 1z" fill="#9bd21c" />
    <path d="M15 8Q17 1 23 1q8 1 8 8 0 4-2 7-3-5-7-3-3-5-7-5z" fill="#4090ec" />
    <path d="M1 17q3 4 8 2 3 1 7 6-1 6-8 6-8-1-7-14z" fill="#ffcb1f" />
    <path d="M22 15q8 0 9 8 0 8-11 8 3-3 1-7-2-3-5-3 1-6 6-6z" fill="#e8503c" />
  </svg>
);
const Palette = () => (
  <svg width="34" height="32" viewBox="0 0 34 32" aria-hidden="true">
    <path d="M4 15Q10 6 21 7t8 11-10 4-4 4-3 4Q10 22 1 24q-1-5 3-9z" fill="#dbeaf6" stroke="#7ba7c8" />
    <circle cx="6" cy="19" r="2.700" fill="#e2412f" />
    <circle cx="12" cy="13" r="2.700" fill="#4caf3d" />
    <circle cx="19" cy="10.500" r="2.700" fill="#f0b52a" />
    <circle cx="15" cy="20" r="2.700" fill="#3c9bd6" />
    <path d="M28 8 19 31l-3-1 9-23z" fill="#e2731e" />
    <path d="M24 4q3-5 9-3-2 7-7 8z" fill="#b98b5c" />
  </svg>
);
const Calculator = () => (
  <svg width="24" height="30" viewBox="0 0 24 30" aria-hidden="true">
    <path d="M1 1h22v28H1z" fill="#dce9f4" stroke="#6997bc" />
    <path d="M3 2h18v2H3z" fill="#ee7e2c" />
    <path d="M3 5h18v8H3z" fill="#c8d7e4" stroke="#99a" strokeWidth=".500" />
    <path d="M16 7h3v4h-3z" fill="none" stroke="#234" />
    <path d="M4 17h16M4 21h16M4 25h12" stroke="#7f9fbd" strokeWidth="3" strokeDasharray="2.500 1" />
    <path d="M18 22h3v5h-3z" fill="#f29d20" />
  </svg>
);
const BrowserE = () => (
  <svg width="32" height="32" viewBox="0 0 32 32" aria-hidden="true">
    <circle cx="16" cy="16" r="14" fill="#4bb82c" stroke="#bfe8b4" />
    <path d="M26 19H12q1 5 6 4 2 0 3-2h5q-3 6-9 6-10-1-10-11T16 5q10 0 10 10zM12 14h9q-1-4-4-4-4 0-5 4z" fill="#fff" />
    <path d="M6 31Q-1 25 13 9 26-2 30 2q-3-1-9 3Q8 14 6 31z" fill="#71d93f" stroke="#2e941b" strokeWidth=".800" />
  </svg>
);
const Explorer = () => (
  <svg width="34" height="30" viewBox="0 0 34 30" aria-hidden="true">
    <path d="M2 4h10l2-2h8l2 3h8v22H2z" fill="#f1d98c" stroke="#b4944c" />
    <path d="M5 1h8v4H5zM12 3h8v4h-8z" fill="#fff" />
    <path d="M5 1h3v2H5z" fill="#2b4" />
    <path d="M12 3h4v2h-4z" fill="#d43" />
    <path d="M20 5h5v2h-5z" fill="#369be0" />
    <path d="M2 8h30v19H2z" fill="#f9e8a7" />
    <path d="M6 30V20q0-2 3-2h16q3 0 3 2v10h-4v-6H10v6z" fill="#8bd4ee" stroke="#4b9dc0" />
  </svg>
);
const ScrollMark = ({ d }: { d: string }) => (
  <svg width="10" height="12" viewBox="0 0 10 12" aria-hidden="true">
    <path d={d} fill="none" stroke="#555" strokeWidth="2" />
  </svg>
);

/* ---------- floating widgets ---------- */

const SpeedBadge = styled.div`
  position: absolute;
  top: -28px;
  left: calc(62.5% - 24px);
  width: 46px;
  height: 46px;
  padding-top: 25px;
  border: 2px solid #dceede;
  border-radius: 50%;
  box-shadow: 0 3px 8px rgba(0, 0, 0, 0.4);
  background: #45bf5c;
  color: #fff;
  font: 700 12px/16px "Noto Sans", sans-serif;
  text-align: center;
`;
const UploadWidget = styled.button`
  position: absolute;
  top: 27px;
  right: 107px;
  display: flex;
  width: 104px;
  height: 25px;
  border: 1px solid #1f80c4;
  border-radius: 3px;
  overflow: hidden;
  box-shadow: 0 1px 2px rgba(0, 0, 0, 0.4);
  background: linear-gradient(#d9f1ff, #9fd6f8);
  color: #2b699a;
`;
const UploadLogo = styled.span`
  display: grid;
  place-items: center;
  width: 29px;
  height: 100%;
  background: #1e92e4;
`;
const UploadText = styled.span`
  flex: 1;
  line-height: 25px;
`;

const MENUS: [string, string][] = [
  ["文件", "F"], ["编辑", "E"], ["视图", "V"], ["插入", "S"], ["格式", "R"], ["工具", "T"],
  ["装配", "A"], ["信息", "I"], ["分析", "L"], ["首选项", "P"], ["窗口", "O"], ["帮助", "H"],
];
const RESOURCE_TABS = [
  ["tree", "treeRed", "wrench"],
  ["broadcast"],
  ["webPage"],
  ["clock", "roles", "rainbow", "wand", "people", "photo"],
];

export default function App() {
  return (
    <Window>
      <GlobalStyle />
      <TitleBar>
        <Icon name="nx" size={16} />
        <TitleText>NX 7 - 建模 - [model5.prt （修改的） ]</TitleText>
        <Brand>SIEMENS</Brand>
        <FrameButton aria-label="最小化"><Icon name="minimize" size={14} /></FrameButton>
        <FrameButton aria-label="还原"><Icon name="restore" size={14} /></FrameButton>
        <FrameButton $danger aria-label="关闭"><Icon name="close" size={14} /></FrameButton>
      </TitleBar>

      <MenuBar>
        <MenuIcon><Icon name="blueprint" size={17} /></MenuIcon>
        {MENUS.map(([label, key]) => (
          <MenuButton key={key}>
            {label}(<u>{key}</u>)
          </MenuButton>
        ))}
        <ChildControls>
          <ChildButton aria-label="最小化"><Icon name="minimize" size={14} /></ChildButton>
          <ChildButton aria-label="还原"><Icon name="restore" size={14} /></ChildButton>
          <ChildButton aria-label="关闭"><Icon name="close" size={14} /></ChildButton>
        </ChildControls>
      </MenuBar>

      <ToolRow>
        <ToolBar start items="newDoc open save | cut copy paste | undo redo | rocket swap | info" />
        <ToolBar items="fit fitGrey zoomBox zoom rotate pan perspective | cube v yinyang cubeRed cubeGrey v sheet v whiteBox v | door1 door2 door3" />
        <ToolBar gap={12} items="axesPen axes | xDim ruler angle measure boxCopy boxFlip" />
        <ToolBar items="keyDoc trim1 trim2 trim3 trim4 trim5" />
      </ToolRow>
      <ToolRow>
        <ToolBar end="spaced" items="sketch | extrude revolve blade tube | offset" />
        <ToolBar items="addCircle v planeSheet v | boxOrange wing boxRedBand book slabs boxHole | boxDots" />
        <ToolBar items="circ1 circ2 wave | contour curveA curveB v curveC curveC project v" />
        <ToolBar items="surf surf surfMesh surfTool surf | fold boot" />
        <ToolBar end="chevron" items="page ringGreen redGear cylRed gearPair shaft ringRed ringBlue gearLine planetary rack planetary gearLine redGear redGear" />
      </ToolRow>

      <SelectionRow>
        <Combo $width={143}>
          <select aria-label="选择过滤器"><option>没有选择过滤器</option></select>
          <ComboArrow />
        </Combo>
        <Combo $width={151}>
          <select aria-label="选择范围"><option>整个装配</option></select>
          <ComboArrow />
        </Combo>
        {"chain | target v returnGrey eraser snapGrey hookGrey | marquee v | cubeLines".split(" ").map((item, i) =>
          item === "|" ? (
            <Divider key={i} />
          ) : item === "v" ? (
            <DropArrow key={i} aria-label="更多"><Arrow /></DropArrow>
          ) : (
            <Tool key={i} aria-label={item}><Icon name={item} /></Tool>
          ),
        )}
        <Overflow $wide aria-label="工具条选项"><Arrow /></Overflow>
      </SelectionRow>

      <PromptRow>
        <PromptCell $grow={1}>选择对象并使用 MB3，或者双击某一对象</PromptCell>
        <PromptCell $grow={1} />
        <PromptCell $width={20} />
        <PromptCell $width={37} />
        <PromptCell $width={21}><Icon name="fullscreen" /></PromptCell>
      </PromptRow>

      <ScrollRow>
        <TabScroller>
          <button aria-label="向左"><ScrollMark d="M9 1.500 2 6l7 4.500" /></button>
          <span />
          <button aria-label="向右"><ScrollMark d="M1 1.500 8 6l-7 4.500" /></button>
        </TabScroller>
        <Groove />
      </ScrollRow>

      <Workspace>
        <ResourceBar>
          {RESOURCE_TABS.map((group, i) => (
            <TabGroup key={i}>
              {group.map((name) => (
                <ResourceTab key={name} aria-label={name}><Icon name={name} /></ResourceTab>
              ))}
            </TabGroup>
          ))}
        </ResourceBar>
        <Rail />
        <Viewport><Model /></Viewport>
      </Workspace>

      <TaskBar>
        <Launcher $width={54} aria-label="开始"><StartOrb /></Launcher>
        <Launcher $width={62} aria-label="桌面助手"><Petals /></Launcher>
        <DotGrip />
        <Launcher $width={76} aria-label="画图"><Palette /></Launcher>
        <Launcher $width={52} aria-label="计算器"><Calculator /></Launcher>
        <LauncherEnd />
        <TaskButton $tone="stack" aria-label="浏览器"><BrowserE /></TaskButton>
        <TaskButton $tone="stack" aria-label="资源管理器"><Explorer /></TaskButton>
        <TaskButton $tone="active" aria-label="NX"><Icon name="nx" size={32} /></TaskButton>
        {[1, 2, 3, 4].map((n) => (
          <TaskButton key={n} aria-label={`窗体 ${n}`}><FormIcon /></TaskButton>
        ))}
        <Tray>
          <DotGrip />
          <TrayButton $width={32} aria-label="百度">
            <svg width="16" height="16" viewBox="0 0 16 16">
              <path d="M0 0h16v16H0z" fill="#f0491c" />
              <path d="M8 7q3 1 5 5 0 2-5 1-5 1-5-1 2-4 5-5z" fill="#fff" />
              <circle cx="3" cy="7" r="1.700" fill="#fff" />
              <circle cx="6" cy="3.500" r="1.700" fill="#fff" />
              <circle cx="10" cy="3.500" r="1.700" fill="#fff" />
              <circle cx="13" cy="7" r="1.700" fill="#fff" />
            </svg>
          </TrayButton>
          <TrayButton $width={14} aria-label="帮助">
            <svg width="16" height="16" viewBox="0 0 16 16">
              <circle cx="8" cy="8" r="7.200" fill="#1020b8" stroke="#9ab0ee" />
              <text x="8" y="12" fill="#fff" fontSize="12" fontWeight="700" textAnchor="middle">?</text>
            </svg>
          </TrayButton>
          <TrayButton $width={30} aria-label="语言栏">
            <svg width="10" height="18" viewBox="0 0 10 18">
              <path d="M3.500 1.500h5v3h-5zM1.500 3.500h5v3h-5z" fill="#235a92" stroke="#fff" />
              <path d="M2 13h6l-3 3z" fill="#fff" />
            </svg>
          </TrayButton>
          <TrayButton $width={10} aria-label="显示隐藏的图标">
            <svg width="8" height="4" viewBox="0 0 8 4"><path d="M0 4l4-4 4 4z" fill="#fff" /></svg>
          </TrayButton>
          <TrayButton $width={38} aria-label="QQ">
            <svg width="16" height="18" viewBox="0 0 16 18">
              <ellipse cx="8" cy="6" rx="5" ry="6" fill="#151515" />
              <path d="M1 17q-1-7 4-8h6q3 1 3 8z" fill="#d8281c" />
              <path d="M4 8h8v3H4z" fill="#f04b20" />
              <circle cx="6.500" cy="4" r="1.300" fill="#fff" />
              <circle cx="9.500" cy="4" r="1.300" fill="#fff" />
              <path d="M6 6h5l-2 2z" fill="#ffae19" />
              <path d="M8 11h8v6H8z" fill="#f3c86b" />
              <path d="M10 8h4v4h-4z" fill="none" stroke="#eee" />
            </svg>
          </TrayButton>
          <TrayButton $width={14} aria-label="音量">
            <svg width="16" height="16" viewBox="0 0 16 16">
              <path d="M1 5h3l4-4v14l-4-4H1z" fill="#fff" />
              <path d="M10 5q2 3 0 6M12 3q4 5 0 10" fill="none" stroke="#dde8f2" />
            </svg>
          </TrayButton>
          <Clock>
            9:56
            <br />
            2015-03-05
          </Clock>
          <ShowDesktop aria-label="显示桌面" />
        </Tray>
      </TaskBar>

      <SpeedBadge>37</SpeedBadge>
      <UploadWidget>
        <UploadLogo><Icon name="cloud" size={20} /></UploadLogo>
        <UploadText>拖拽上传</UploadText>
      </UploadWidget>
    </Window>
  );
}
